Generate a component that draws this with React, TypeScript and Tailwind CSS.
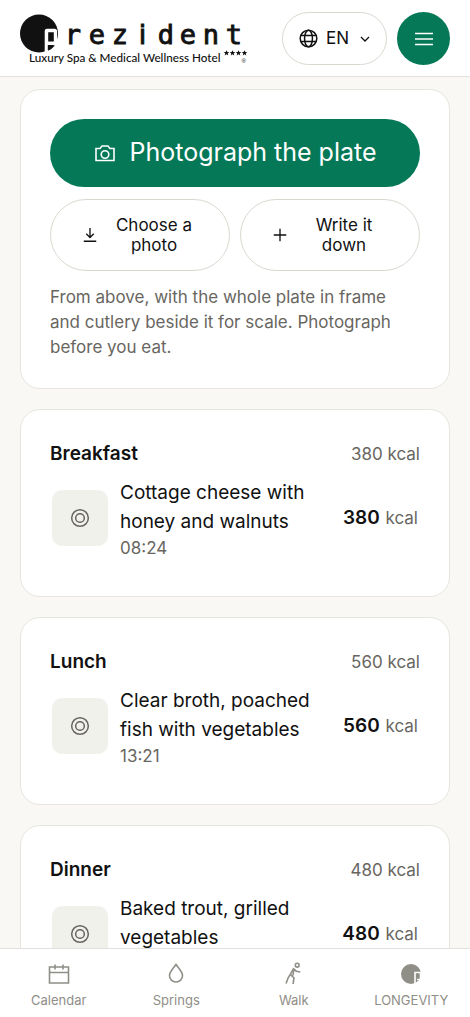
import type { ReactNode } from 'react';

interface Meal {
  title: string;
  name: string;
  time: string;
  kcal: number;
}

const meals: Meal[] = [
  { title: 'Breakfast', name: 'Cottage cheese with honey and walnuts', time: '08:24', kcal: 380 },
  { title: 'Lunch', name: 'Clear broth, poached fish with vegetables', time: '13:21', kcal: 560 },
  { title: 'Dinner', name: 'Baked trout, grilled vegetables', time: '18:47', kcal: 480 },
];

interface IconProps {
  className?: string;
  children: ReactNode;
}

function Icon({ className = 'size-6', children }: IconProps) {
  return (
    <svg
      viewBox="0 0 24 24"
      fill="none"
      stroke="currentColor"
      strokeWidth="1.6"
      className={`shrink-0 ${className}`}
      aria-hidden="true"
    >
      {children}
    </svg>
  );
}

function Logo() {
  return (
    <a href="#home" aria-label="Prezident, Luxury Spa & Medical Wellness Hotel" className="block shrink-0 text-[#111111]">
      <svg viewBox="0 0 228 52" className="h-[52px] w-[228px]" aria-hidden="true">
        <circle cx="19" cy="20.5" r="19" fill="currentColor" />
        <path d="M24.700 39V18q0-2.300 2.300-2.300h7.500q2.600 0 2.600 2.600V29q0 3-3 3h-6.300v7z" fill="#fff" />
        <path d="M28.200 19.300h5.600v9.200h-5.600zM28.200 32.500h6.800q-3 3.500-6.800 5.200z" fill="currentColor" />
        <g
          fill="currentColor"
          stroke="currentColor"
          strokeWidth="0.900"
          fontFamily="'DejaVu Sans Mono', monospace"
          fontSize="27"
          textAnchor="middle"
        >
          <text x="53" y="31">r</text>
          <text x="77" y="31">e</text>
          <text x="100" y="31">z</text>
          <text x="122.500" y="31" fontFamily="'DejaVu Sans', sans-serif">i</text>
          <text x="146" y="31">d</text>
          <text x="168" y="31">e</text>
          <text x="191" y="31">n</text>
          <text x="214" y="31">t</text>
        </g>
        <text x="9" y="49" fill="currentColor" fontFamily="Lato, sans-serif" fontSize="11.700" fontWeight="500">
          Luxury Spa &amp; Medical Wellness Hotel
        </text>
        {[206.500, 212.500, 218.500, 224.500].map((x) => (
          <path
            key={x}
            transform={`translate(${x} 40)`}
            d="M0-2.800.8-.9 2.800-.8 1.200.5 1.800 2.400 0 1.300-1.800 2.400-1.200.5-2.800-.8-.8-.9z"
            fill="currentColor"
          />
        ))}
        <text x="221.500" y="49.500" fill="currentColor" fontFamily="'Liberation Sans', sans-serif" fontSize="6">
          ®
        </text>
      </svg>
    </a>
  );
}

function Header() {
  return (
    <header className="flex shrink-0 items-center justify-between border-b border-[#e2e1db] bg-white px-5 pt-3 pb-[11px]">
      <Logo />
      <div className="flex gap-2.5">
        <div className="relative">
          <select
            aria-label="Language"
            defaultValue="EN"
            className="h-[53px] w-[105px] appearance-none rounded-full border border-[#d9d8d0] bg-white pl-[43px] text-[17px]"
          >
            <option>EN</option>
            <option>CS</option>
            <option>DE</option>
          </select>
          <span className="pointer-events-none absolute inset-y-0 left-4 flex items-center">
            <Icon className="size-[21px]">
              <g strokeWidth="1.700">
                <circle cx="12" cy="12" r="9.500" />
                <ellipse cx="12" cy="12" rx="4.500" ry="9.500" />
                <path d="M3.500 8.500h17M3.500 15.500h17" />
              </g>
            </Icon>
          </span>
          <span className="pointer-events-none absolute inset-y-0 right-4 flex items-center">
            <Icon className="size-3">
              <path d="m4 8 8 8 8-8" strokeWidth="2.600" />
            </Icon>
          </span>
        </div>
        <button type="button" aria-label="Menu" className="flex size-[53px] items-center justify-center rounded-full bg-[#047857] text-white">
          <Icon>
            <path d="M3 6.500h18M3 12h18M3 17.500h18" strokeWidth="1.600" />
          </Icon>
        </button>
      </div>
    </header>
  );
}

function Card({ className, children }: { className: string; children: ReactNode }) {
  return <section className={`rounded-[20px] border border-[#e6e5df] bg-white px-[29px] ${className}`}>{children}</section>;
}

function SecondaryButton({ icon, children }: { icon: ReactNode; children: ReactNode }) {
  return (
    <button
      type="button"
      className="flex flex-1 items-center gap-2 rounded-full border border-[#d9d8d0] px-[29px] py-[15px] text-[17px] leading-5"
    >
      <Icon className="size-5">{icon}</Icon>
      <span className="flex-1 px-1 text-center">{children}</span>
    </button>
  );
}

function CaptureCard() {
  return (
    <Card className="py-[29px]">
      <button
        type="button"
        className="flex h-[68px] w-full items-center justify-center gap-3 rounded-full bg-[#047857] text-[25px] text-white"
      >
        <Icon>
          <path d="M3 7.500h4L9 5h6l2 2.500h4v12H3z" />
          <circle cx="12" cy="13.500" r="3.800" />
        </Icon>
        Photograph the plate
      </button>
      <div className="mt-3 flex gap-2.5">
        <SecondaryButton icon={<path d="M12 3.500V15M7.500 10.500 12 15l4.500-4.500M4.500 19.500h15" />}>Choose a photo</SecondaryButton>
        <SecondaryButton icon={<path d="M12 4.500v15M4.500 12h15" />}>Write it down</SecondaryButton>
      </div>
      <p className="mt-3.5 -mb-px text-[17px] leading-[25px] text-[#68665f]">
        From above, with the whole plate in frame and cutlery beside it for scale. Photograph before you eat.
      </p>
    </Card>
  );
}

function MealCard({ meal }: { meal: Meal }) {
  return (
    <Card className="pt-[30px] pb-9">
      <div className="flex items-center justify-between leading-7">
        <h2 className="text-[19px] font-semibold">{meal.title}</h2>
        <span className="text-[17px] text-[#68665f]">{meal.kcal} kcal</span>
      </div>
      <div className="mt-2 flex items-center gap-3 px-0.5">
        <div className="flex size-14 shrink-0 items-center justify-center rounded-[10px] bg-[#f0f1eb] text-[#68665f]">
          <Icon className="size-5">
            <circle cx="12" cy="12" r="10" strokeWidth="1.800" />
            <circle cx="12" cy="12" r="5.200" strokeWidth="1.800" />
          </Icon>
        </div>
        <div className="flex-1 pt-0.5">
          <p className="text-[19px] leading-[29px]">{meal.name}</p>
          <p className="text-[17px] leading-6 text-[#68665f]">{meal.time}</p>
        </div>
        <p className="shrink-0 text-[17px] text-[#68665f]">
          <strong className="mr-px text-[19px] font-semibold text-[#111111]">{meal.kcal}</strong> kcal
        </p>
      </div>
    </Card>
  );
}

const tabs = [
  {
    label: 'Calendar',
    icon: (
      <Icon>
        <path d="M2.500 5h19v16h-19zM2.500 10.500h19M8 2.500v5M16 2.500v5" />
      </Icon>
    ),
  },
  {
    label: 'Springs',
    icon: (
      <Icon>
        <path d="M12 2.500C9.500 6 5.500 9.500 5.500 13.500a6.500 6.500 0 0 0 13 0C18.500 9.500 14.500 6 12 2.500z" />
      </Icon>
    ),
  },
  {
    label: 'Walk',
    icon: (
      <Icon>
        <circle cx="15.200" cy="3.200" r="1.900" />
        <path d="M18.300 10 14.200 9.200 11.500 6.800 8.300 12.400 12 16 11 22M8.300 12.400 6.300 15.500 4 21.500M11.800 7.500 11 13.500" />
      </Icon>
    ),
  },
  {
    label: 'LONGEVITY',
    icon: (
      <Icon>
        <circle cx="12" cy="12" r="10" fill="currentColor" stroke="none" />
        <path d="M16 22V10.500h5.500v7H18" stroke="#fff" />
      </Icon>
    ),
  },
];

function TabBar() {
  return (
    <nav className="grid shrink-0 grid-cols-4 border-t border-[#e2e1db] bg-white pt-[13px] pb-[7px] text-[13px] leading-5 text-[#8f8e87]">
      {tabs.map((tab) => (
        <a key={tab.label} href={`#${tab.label.toLowerCase()}`} className="flex flex-col items-center gap-1">
          {tab.icon}
          {tab.label}
        </a>
      ))}
    </nav>
  );
}

export default function App() {
  return (
    <div className="flex h-dvh flex-col bg-[#f9f8f4] font-[Inter,sans-serif] text-[#111111]">
      <Header />
      <main className="flex min-h-0 flex-1 flex-col gap-5 overflow-y-auto px-5 pt-3 pb-5 [scrollbar-width:none] *:shrink-0">
        <CaptureCard />
        {meals.map((meal) => (
          <MealCard key={meal.title} meal={meal} />
        ))}
      </main>
      <TabBar />
    </div>
  );
}
